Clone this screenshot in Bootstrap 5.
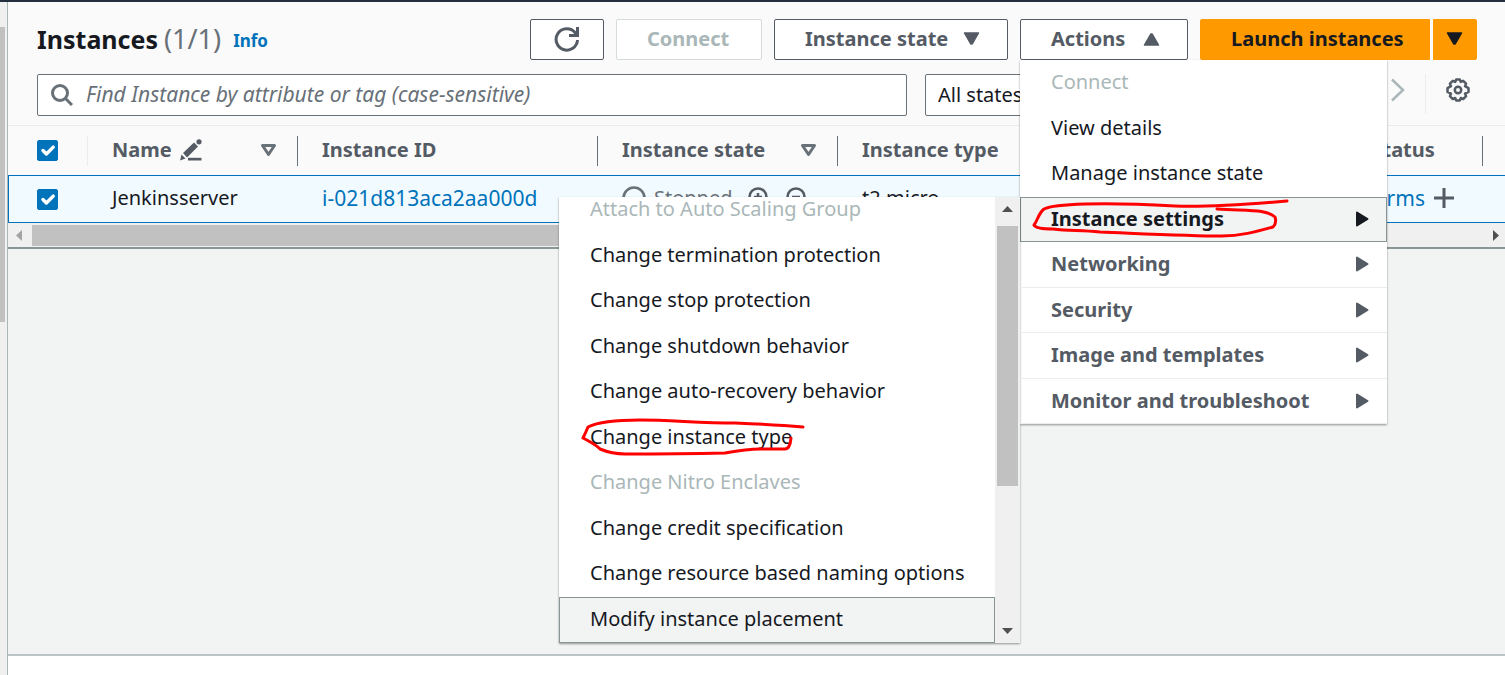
<!DOCTYPE html>
<html lang="en">
<head>
<meta charset="utf-8">
<meta name="viewport" content="width=device-width, initial-scale=1">
<title>Instances</title>
<link href="https://cdn.jsdelivr.net/npm/bootstrap@5.3.0/dist/css/bootstrap.min.css" rel="stylesheet">
<style>
  :root { --ink:#16191f; --slate:#545b64; --mute:#687078; --off:#aab7b8; --blue:#0073bb; --line:#eaeded; }
  body { font-family:"Noto Sans","Open Sans",sans-serif; font-size:20px; line-height:28px; color:var(--ink); background:#fff; overflow:hidden; }
  svg { display:block; flex:none; }
  a { color:var(--blue); text-decoration:none; }
  .topline { height:2px; background:#232f3e; }
  .rail { width:7px; flex:none; background:#f0f0f0; }
  .rail-thumb { width:5px; height:295px; margin-top:25px; background:#c1c1c1; }
  .panel { border-left:1px solid #aab7b8; min-width:0; }
  .panel-top { background:#fafafa; padding:17px 28px 9px 29px; border-bottom:1px solid var(--line); }
  .title { font-size:25px; line-height:36px; font-weight:700; display:flex; align-items:center; align-self:flex-start; gap:6px; }
  .title span { font-size:27px; font-weight:400; color:var(--mute); }
  .info { font-size:17px; font-weight:700; margin:4px 0 0 6px; }
  .tool-row { gap:12px; }
  .act { height:41px; padding:0 30px 2px; border:1px solid var(--slate); border-radius:2px; background:#fff; color:var(--slate); font-weight:700; display:flex; align-items:center; justify-content:space-between; white-space:nowrap; }
  .act:disabled { color:var(--off); border-color:#d5dbdb; }
  .w-icon { width:74px; justify-content:center; } .w-connect { width:146px; } .w-state { width:234px; padding-right:27px; } .w-actions { width:168px; padding-right:27px; }
  .act.primary { background:#ff9900; border-color:#ff9900; color:var(--ink); width:230px; border-radius:2px 0 0 2px; }
  .act.caret { width:44px; padding:0 12px 2px; border-radius:0 2px 2px 0; }
  .filter { margin-top:14px; }
  .find { height:42px; border:1px solid var(--mute); border-radius:2px; background:#fff; padding-left:13px; gap:13px; }
  .find input { font-size:21px; border:0; outline:0; background:none; height:38px; padding:0 0 2px; }
  .find input::placeholder { color:var(--mute); font-style:italic; opacity:1; }
  .states { width:250px; height:42px; margin-left:18px; border:1px solid var(--mute); border-radius:2px; background:#fff; padding:0 12px; color:var(--ink); appearance:none; }
  .pager { width:302px; flex:none; gap:16px; height:32px; padding-right:7px; }
  .pager button, .plain { border:0; background:none; padding:0; color:inherit; }
  .pager .vr { background:var(--line); opacity:1; width:1px; height:40px; }
  .grid-wrap { overflow:hidden; }
  .grid { table-layout:fixed; width:1900px; border-collapse:separate; border-spacing:0; white-space:nowrap; }
  .grid th { height:49px; background:#fafafa; color:var(--slate); padding:0 0 0 24px; }
  .grid th > div { height:30px; border-right:1px solid var(--mute); padding:0 20px 2px 0; }
  .grid th.pick > div { border-color:var(--line); padding-bottom:0; }
  .grid td { height:48px; background:#f1faff; border:solid var(--blue); border-width:1px 0; padding:0 0 2px 24px; }
  .grid td a { font-size:21px; }
  .grid .pick { padding-left:29px; }
  .grid td.pick { border-left-width:1px; padding:0 0 0 28px; }
  .grid .form-check-input { width:21px; height:21px; margin:0; border-radius:2px; display:block; background-size:120%; }
  .form-check-input:checked { background-color:var(--blue); border-color:var(--blue); }
  .hbar { height:26px; background:#f0f0f0; border-bottom:2px solid #879596; padding:2px 6px 1px 8px; gap:10px; }
  .hbar div { background:#c1c1c1; height:21px; width:1100px; }
  .rest { background:#f2f3f3; border-bottom:2px solid #bcc5c6; }
  .tail { height:19px; }
  .menu { position:absolute; left:0; top:100%; width:367px; height:364px; margin:0; padding:0; list-style:none; background:#fff; z-index:5; box-shadow:0 1px 2px #0006; }
  .menu > li { flex:1 1 0; border-bottom:1px solid var(--line); position:relative; }
  .menu > li:nth-child(-n+3) { border-color:#fff; }
  .item { width:100%; height:100%; border:0; background:none; text-align:left; padding:0 18px 0 31px; color:var(--ink); display:flex; align-items:center; justify-content:space-between; white-space:nowrap; }
  .item:disabled { color:var(--off); }
  .item.group { font-weight:700; color:var(--slate); }
  .item.on { background:#f2f3f3; border:1px solid #879596; padding-left:30px; padding-right:17px; color:var(--ink); }
  .menu > li > .item.on { height:calc(100% + 1px); }
  .sub { position:absolute; right:100%; top:0; width:461px; height:446px; background:#fff; overflow:hidden; box-shadow:0 1px 2px #0006; }
  .sub ul { list-style:none; padding:0; margin:0; height:455px; flex:1; align-self:flex-end; }
  .sub li { flex:1 1 0; position:relative; }
  .sub .item { padding-bottom:2px; }
  .vbar { width:25px; background:#f0f0f0; padding:9px 2px; }
  .vbar div { width:21px; height:260px; margin:14px 0 auto; background:#c1c1c1; }
  .scrawl { position:absolute; pointer-events:none; fill:none; stroke:#f00; stroke-width:3; stroke-linecap:round; stroke-linejoin:round; }
  .s-set { left:12px; top:0; } .s-type { left:21px; top:2px; }
</style>
</head>
<body>
<div class="vh-100 d-flex flex-column">
  <div class="topline"></div>
  <div class="d-flex flex-fill">
    <div class="rail"><div class="rail-thumb"></div></div>
    <main class="panel flex-fill d-flex flex-column">
      <div class="panel-top">
        <div class="d-flex tool-row">
          <h1 class="title m-0 me-auto">Instances <span>(1/1)</span> <a class="info" href="#">Info</a></h1>
          <button class="act w-icon" aria-label="Refresh"><svg width="26" height="26" viewBox="0 0 26 26" fill="none" stroke="currentColor" stroke-width="3"><path d="M23.500 14A10.700 10.700 0 1 1 21 6.500L23 9M23.500 1v8.500H15"/></svg></button>
          <button class="act w-connect" disabled>Connect</button>
          <button class="act w-state">Instance state <svg width="17" height="14" viewBox="0 0 17 14" fill="currentColor"><path d="M1.500 1h14L9.200 12h-1.400z" stroke="currentColor" stroke-linejoin="round" stroke-width="1.500"/></svg></button>
          <div class="position-relative">
            <button class="act w-actions" aria-expanded="true">Actions <svg width="17" height="14" viewBox="0 0 17 14" fill="currentColor"><path d="M1.500 13h14L9.200 2h-1.400z" stroke="currentColor" stroke-linejoin="round" stroke-width="1.500"/></svg></button>
            <ul class="menu d-flex flex-column">
              <li><button class="item" disabled>Connect</button></li>
              <li><button class="item">View details</button></li>
              <li><button class="item">Manage instance state</button></li>
              <li>
                <button class="item group on">Instance settings <svg width="14" height="16" viewBox="0 0 14 16" fill="currentColor"><path d="M2 1.500v13L12.500 8z" stroke="currentColor" stroke-linejoin="round" stroke-width="2"/></svg></button>
                <svg class="scrawl s-set" width="260" height="46" viewBox="1032 196 260 46"><path d="M1287 200C1240 204 1200 206 1175 205C1140 203 1110 202 1085 203Q1052 204 1044 208C1038 213 1038 219 1034 224Q1036 228 1053 228C1070 230 1080 229 1100 231C1150 233 1190 235 1222 235C1240 235 1255 231 1273 226Q1277 222 1275 216C1266 208 1250 210 1217 208"/></svg>
                <div class="sub d-flex">
                  <ul class="d-flex flex-column">
                    <li><button class="item" disabled>Attach to Auto Scaling Group</button></li>
                    <li><button class="item">Change termination protection</button></li>
                    <li><button class="item">Change stop protection</button></li>
                    <li><button class="item">Change shutdown behavior</button></li>
                    <li><button class="item">Change auto-recovery behavior</button></li>
                    <li><button class="item">Change instance type</button>
                      <svg class="scrawl s-type" width="226" height="40" viewBox="580 417 226 40"><path d="M803 427C780 425 760 424 735 423C700 423 670 420 640 420C615 420 598 422 588 427C586 432 585 434 583 438C590 442 595 444 600 449Q612 454 625 454C655 454 680 454 725 453C742 450 750 449 760 449L785 449Q790 449 791 438"/></svg></li>
                    <li><button class="item" disabled>Change Nitro Enclaves</button></li>
                    <li><button class="item">Change credit specification</button></li>
                    <li><button class="item">Change resource based naming options</button></li>
                    <li><button class="item on">Modify instance placement</button></li>
                  </ul>
                  <div class="vbar d-flex flex-column align-items-center"><svg width="11" height="6"><path d="M0 6L5.500 0L11 6z" fill="#505050"/></svg><div></div><svg width="11" height="6"><path d="M0 0L5.500 6L11 0z" fill="#505050"/></svg></div>
                </div>
              </li>
              <li><button class="item group">Networking <svg width="14" height="16" viewBox="0 0 14 16" fill="currentColor"><path d="M2 1.500v13L12.500 8z" stroke="currentColor" stroke-linejoin="round" stroke-width="2"/></svg></button></li>
              <li><button class="item group">Security <svg width="14" height="16" viewBox="0 0 14 16" fill="currentColor"><path d="M2 1.500v13L12.500 8z" stroke="currentColor" stroke-linejoin="round" stroke-width="2"/></svg></button></li>
              <li><button class="item group">Image and templates <svg width="14" height="16" viewBox="0 0 14 16" fill="currentColor"><path d="M2 1.500v13L12.500 8z" stroke="currentColor" stroke-linejoin="round" stroke-width="2"/></svg></button></li>
              <li><button class="item group">Monitor and troubleshoot <svg width="14" height="16" viewBox="0 0 14 16" fill="currentColor"><path d="M2 1.500v13L12.500 8z" stroke="currentColor" stroke-linejoin="round" stroke-width="2"/></svg></button></li>
            </ul>
          </div>
          <div class="d-flex" style="gap:3px">
            <button class="act primary">Launch instances</button>
            <button class="act primary caret" aria-label="More launch options"><svg width="17" height="14" viewBox="0 0 17 14" fill="currentColor"><path d="M1.500 1h14L9.200 12h-1.400z" stroke="currentColor" stroke-linejoin="round" stroke-width="1.500"/></svg></button>
          </div>
        </div>
        <div class="d-flex filter">
          <div class="find d-flex align-items-center flex-fill">
            <svg width="22" height="22" viewBox="0 0 22 22" fill="none" stroke="#687078" stroke-width="3"><circle cx="9" cy="9" r="7.500"/><path d="M14.500 14.500l6.500 6.500"/></svg>
            <input class="flex-fill" type="text" aria-label="Find instance" placeholder="Find Instance by attribute or tag (case-sensitive)">
          </div>
          <select class="states" aria-label="State filter"><option>All states</option></select>
          <div class="pager d-flex align-items-center justify-content-end">
            <button aria-label="Next page"><svg width="14" height="24" viewBox="0 0 14 24" fill="none" stroke="#aab7b8" stroke-width="2.500"><path d="M1 1.500L12 12L1 22.500"/></svg></button>
            <span class="vr mx-1"></span>
            <button aria-label="Preferences"><svg width="24" height="24" viewBox="0 0 24 24" fill="none" stroke="#545b64" stroke-width="2.500" stroke-linejoin="round"><path d="M10.200 1.500h3.600l1 2.400 2.400-1.100 2.900 2.900-1.100 2.500 3.500 1.900v3.800l-3.500 1.800 1.100 2.500-2.900 2.900-2.400-1.100-1 2.400h-3.600l-1-2.400-2.400 1.100-2.900-2.900L5 15.700l-3.500-1.800v-3.800L5 8.200 3.900 5.700l2.900-2.900 2.400 1.100z"/><circle cx="12" cy="12" r="3.200"/></svg></button>
          </div>
        </div>
      </div>
      <div class="grid-wrap">
        <table class="grid">
          <colgroup><col style="width:80px"><col style="width:210px"><col style="width:300px"><col style="width:240px"><col style="width:220px"><col style="width:225px"><col style="width:200px"><col></colgroup>
          <thead><tr>
            <th class="pick"><div class="d-flex align-items-center"><input class="form-check-input" type="checkbox" checked aria-label="Select all"></div></th>
            <th><div class="d-flex align-items-center">Name <svg class="ms-2 me-auto" width="22" height="22" viewBox="0 0 22 22" fill="#545b64"><path d="M0 21.500l1.500-6 4 4zM3 14L14 3.500l4 4L7 18.500z"/><circle cx="19" cy="2.800" r="2.600"/><path d="M8 18.800h13.500v2.700H8z"/></svg><svg width="17" height="14" viewBox="0 0 17 14" fill="none" stroke="#687078" stroke-width="3" stroke-linejoin="round"><path d="M2.500 2.500h12L8.500 11.500z"/></svg></div></th>
            <th><div class="d-flex align-items-center">Instance ID</div></th>
            <th><div class="d-flex align-items-center justify-content-between">Instance state <svg width="17" height="14" viewBox="0 0 17 14" fill="none" stroke="#687078" stroke-width="3" stroke-linejoin="round"><path d="M2.500 2.500h12L8.500 11.500z"/></svg></div></th>
            <th><div class="d-flex align-items-center">Instance type</div></th>
            <th></th>
            <th><div class="d-flex align-items-center">Alarm status</div></th>
            <th></th>
          </tr></thead>
          <tbody><tr>
            <td class="pick"><input class="form-check-input" type="checkbox" checked aria-label="Select Jenkinsserver"></td>
            <td>Jenkinsserver</td>
            <td><a href="#">i-021d813aca2aa000d</a></td>
            <td><div class="d-flex align-items-center" style="color:#687078"><svg width="24" height="24" viewBox="0 0 24 24" fill="none" stroke="currentColor" stroke-width="2.500"><circle cx="12" cy="12" r="10.500"/></svg><span class="ms-2">Stopped</span>
              <button class="plain ms-3" aria-label="Include state"><svg width="22" height="22" viewBox="0 0 22 22" fill="none" stroke="#545b64" stroke-width="2.500"><circle cx="10" cy="10" r="8.500"/><path d="M10 6v8M6 10h8M16 16l5 5"/></svg></button>
              <button class="plain ms-3" aria-label="Exclude state"><svg width="22" height="22" viewBox="0 0 22 22" fill="none" stroke="#545b64" stroke-width="2.500"><circle cx="10" cy="10" r="8.500"/><path d="M6 10h8M16 16l5 5"/></svg></button></div></td>
            <td>t2.micro</td>
            <td></td>
            <td><div class="d-flex align-items-center justify-content-end gap-2 pe-4"><a href="#">No alarms</a><button class="plain me-1" aria-label="Add alarm"><svg width="22" height="22" viewBox="0 0 22 22" stroke="#545b64" stroke-width="3"><path d="M11 1v20M1 11h20"/></svg></button></div></td>
            <td></td>
          </tr></tbody>
        </table>
      </div>
      <div class="hbar d-flex align-items-center"><svg width="6" height="11"><path d="M6 0v11L0 5.500z" fill="#a3a3a3"/></svg><div></div><svg class="ms-auto" width="6" height="11"><path d="M0 0v11l6-5.500z" fill="#505050"/></svg></div>
      <div class="rest flex-fill"></div>
      <div class="tail"></div>
    </main>
  </div>
</div>
<script src="https://cdn.jsdelivr.net/npm/bootstrap@5.3.0/dist/js/bootstrap.bundle.min.js"></script>
</body>
</html>
